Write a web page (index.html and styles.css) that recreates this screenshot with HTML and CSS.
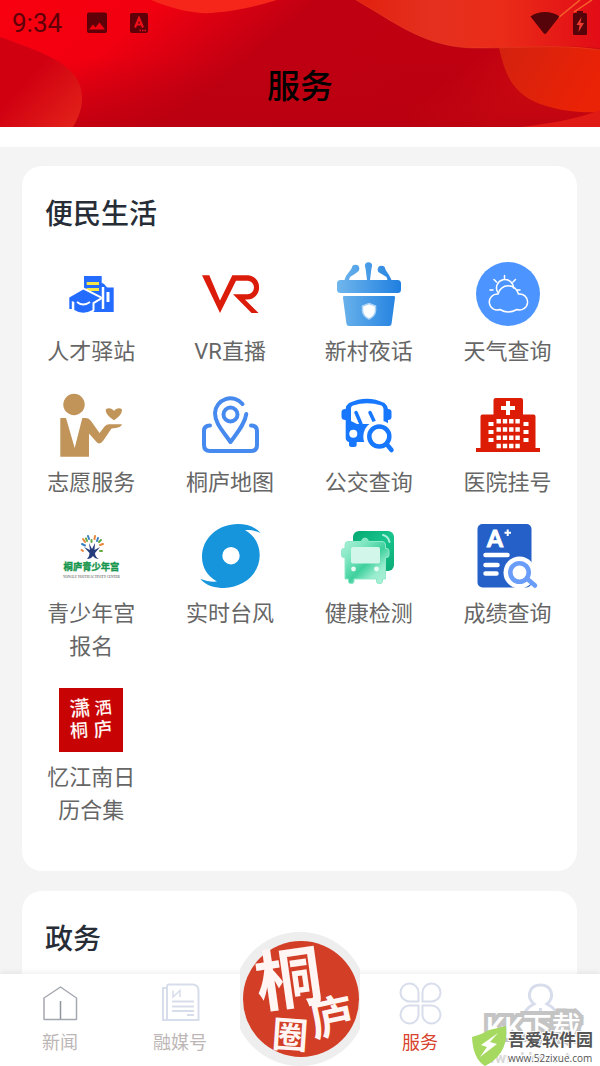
FILE: index.html
```html
<!DOCTYPE html>
<html lang="zh-CN">
<head>
  <meta charset="UTF-8"/>
  <meta name="viewport" content="width=device-width, initial-scale=1">
  <title>服务</title>
  <link rel="stylesheet" href="styles.css">
</head>
<body>

<header class="header">
  <svg class="header-bg" viewBox="0 0 600 127" preserveAspectRatio="none" aria-hidden="true">
    <defs>
      <linearGradient id="hbase" x1="0" y1="0" x2="1" y2="0.25">
        <stop offset="0" stop-color="#f8000f"/>
        <stop offset="0.25" stop-color="#f20010"/>
        <stop offset="0.5" stop-color="#bf0012"/>
        <stop offset="0.85" stop-color="#be0011"/>
        <stop offset="1" stop-color="#d00c10"/>
      </linearGradient>
      <linearGradient id="hlow" x1="0" y1="0" x2="0" y2="1">
        <stop offset="0.45" stop-color="#b80010" stop-opacity="0"/>
        <stop offset="1" stop-color="#b80010" stop-opacity="0.7"/>
      </linearGradient>
      <linearGradient id="hblob" x1="0" y1="0" x2="1" y2="1">
        <stop offset="0.4" stop-color="#d00011"/>
        <stop offset="1" stop-color="#e4241a"/>
      </linearGradient>
      <linearGradient id="hwave" x1="0" y1="0" x2="1" y2="0">
        <stop offset="0" stop-color="#e2200f"/>
        <stop offset="0.3" stop-color="#e5301f"/>
        <stop offset="0.6" stop-color="#ea2c18"/>
        <stop offset="1" stop-color="#e20c16"/>
      </linearGradient>
      <linearGradient id="hfold" x1="0" y1="0" x2="1" y2="0.4">
        <stop offset="0" stop-color="#d3220f"/>
        <stop offset="1" stop-color="#ea2206"/>
      </linearGradient>
    </defs>
    <rect width="600" height="127" fill="url(#hbase)"/>
    <rect width="600" height="127" fill="url(#hlow)"/>
    <path d="M0 37C30 48 62 58 75 76C87 94 82 112 73 127H0Z" fill="url(#hblob)"/>
    <path d="M151 0C175 10 195 14 212 13C240 11 260 5 277 0Z" fill="#f6261a"/>
    <path d="M356 0C395 22 425 48 476 48C530 48 560 44 600 48V0Z" fill="url(#hwave)"/>
    <path d="M499 48C505 72 510 92 540 104C560 111 580 113 600 112V50C570 45 540 46 499 48Z" fill="url(#hfold)"/>
    <path d="M520 127C555 123 580 118 600 110V127Z" fill="#e01a14"/>
    <path d="M356 0C395 22 425 48 476 48C530 48 560 44 600 50" fill="none" stroke="#f2512e" stroke-opacity="0.4"/>
    <path d="M558 18L580 0M574 12L592 0" stroke="#f7622c" stroke-width="1.500"/>
  </svg>
  <div class="status-bar">
    <span class="time">9:34</span>
    <svg width="22" height="22" viewBox="0 0 22 22" fill="#5f0009" aria-hidden="true">
      <path fill-rule="evenodd" d="M3 0.500h16a2 2 0 0 1 2 2v16.500a2 2 0 0 1-2 2H3a2 2 0 0 1-2-2V2.500a2 2 0 0 1 2-2ZM3 17.500H19L13.500 10.500L9.500 15.500L7 12.500Z"/>
    </svg>
    <svg class="lang" width="18" height="20" viewBox="0 0 18 20" aria-hidden="true">
      <rect width="18" height="20" rx="2" fill="#5f0009"/>
      <path d="M5 14.500L9 5L13 14.500M6.500 11.500H11.500" fill="none" stroke="#ee0f1a" stroke-width="2.200"/>
      <path d="M9.500 17.500H16" stroke="#ee0f1a" stroke-width="1.500" stroke-dasharray="1.500 1"/>
    </svg>
    <span class="spacer"></span>
    <svg width="30" height="24" viewBox="0 0 30 24" fill="#560409" aria-hidden="true">
      <path d="M0.500 5.500C8 -0.500 22 -0.500 29.500 5.500L16.500 22Q15 24 13.500 22Z"/>
    </svg>
    <svg class="battery" width="16" height="24" viewBox="0 0 16 24" aria-hidden="true">
      <path d="M5 0h6v2h2.500A1.500 1.500 0 0 1 15 3.500V22.500a1.500 1.500 0 0 1-1.500 1.500h-11A1.500 1.500 0 0 1 1 22.500V3.500A1.500 1.500 0 0 1 2.500 2H5Z" fill="#560409"/>
      <path d="M9.500 6L4.500 14H7.500L6.500 21L12 12H8.500Z" fill="#ee3a30"/>
    </svg>
  </div>
  <h1>服务</h1>
</header>

<main class="content">
  <section class="card">
    <h2>便民生活</h2>
    <div class="services">
      <a class="service" href="#">
        <svg viewBox="0 0 64 64" aria-hidden="true">
          <path d="M25 14H42.700V21C46 21 46 25 49 25.500H54.700V50H25Z" fill="#246cff"/>
          <path d="M44 25V47" stroke="#fff" stroke-width="2.500"/>
          <path d="M49 30V40" stroke="#fff" stroke-width="3"/>
          <path d="M27.700 21.500H40M27.700 27.500H40" stroke="#f4e648" stroke-width="3"/>
          <path d="M10.300 35.500L24.300 27.500L41 36L33.500 40.500V48Q24 53.500 15.300 48V40L12.800 39V47H10.300Z" fill="#246cff" stroke="#fff" stroke-width="4" paint-order="stroke" stroke-linejoin="round"/>
          <path d="M18 40Q24 45 31 40" fill="none" stroke="#fff" stroke-width="2"/>
        </svg>
        <span>人才驿站</span>
      </a>
      <a class="service" href="#">
        <svg viewBox="0 0 64 64" aria-hidden="true">
          <path d="M4 13.300H11.300L22 38.500L34.300 13.300H49.500A11.500 12 0 0 1 49.500 37.500H47L60.500 51H53.500L35 32.300H49.500A6.500 6.800 0 0 0 49.500 18.700H38L22 51Z" fill="#dc1c0a"/>
        </svg>
        <span>VR直播</span>
      </a>
      <a class="service" href="#">
        <svg viewBox="0 0 64 64" aria-hidden="true">
          <defs>
            <linearGradient id="pod" gradientUnits="userSpaceOnUse" x1="0" y1="0" x2="64" y2="0">
              <stop offset="0" stop-color="#70b6ec"/>
              <stop offset="1" stop-color="#1f7fe0"/>
            </linearGradient>
          </defs>
          <g fill="url(#pod)">
            <rect x="0" y="18" width="64" height="13" rx="3.500"/>
            <path d="M7 34H57Q58.500 34 58 36L54.500 62Q54 64 52 64H12Q10 64 9.500 62L6 36Q5.500 34 7 34Z"/>
            <circle cx="18.500" cy="6.500" r="3.800"/>
            <circle cx="31.500" cy="3.800" r="3.600"/>
            <circle cx="44.500" cy="7.500" r="3.800"/>
            <path d="M15 6L20 10.500L13 15L12 18H7.500L9 14Z"/>
            <path d="M28.500 6H34.500L33 18H30Z"/>
            <path d="M43 11L48 7L52 13L54.500 18H50.500L49.500 15Z"/>
          </g>
          <path d="M32 41.500L38.500 44V49Q38 54 32 57Q26 54 25.500 49V44Z" fill="#fff" stroke="#a9d2f6" stroke-width="1.500"/>
        </svg>
        <span>新村夜话</span>
      </a>
      <a class="service" href="#">
        <svg viewBox="0 0 64 64" aria-hidden="true">
          <circle cx="32" cy="32" r="32" fill="#4c94ff"/>
          <g fill="none" stroke="#fff" stroke-width="1.500" stroke-linecap="round">
            <path d="M21.500 30A8.500 8.500 0 1 1 37.500 26M28.500 13.500V17.500M18 17.500L20.500 20M39.500 17.500L37 20M14 28H17M41 28H44"/>
            <path d="M24 47.500A8 8 0 1 1 22 32A10.500 10.500 0 0 1 42.500 32A8 8 0 1 1 41 47.500Q32 52.500 24 47.500Z"/>
          </g>
        </svg>
        <span>天气查询</span>
      </a>

      <a class="service" href="#">
        <svg viewBox="0 0 64 64" fill="#c1945a" aria-hidden="true">
          <circle cx="15" cy="11.500" r="10.700"/>
          <path d="M1.300 25H7L15.700 55L23.300 25H27Q30 25 32 28L40.500 40L46 33Q47.500 31.300 50 31.300H63Q62 35 52.500 35.500L44 48Q41 52 38 49.500L30 40.500V63.700H1.300Z"/>
          <path d="M55 27.300C50 24 46.700 21 46.700 16.500C49 14.500 53 15 55 18C57 15 61 14.500 63 16.500C63 21 60 24 55 27.300Z"/>
        </svg>
        <span>志愿服务</span>
      </a>
      <a class="service" href="#">
        <svg viewBox="0 0 64 64" fill="none" stroke="#468af0" stroke-width="4" stroke-linecap="round" stroke-linejoin="round" aria-hidden="true">
          <circle cx="32.500" cy="21.500" r="7"/>
          <path d="M44.500 11A15.500 15.500 0 0 0 17 20C17 30 24 37 32.500 49C39 40 47 31 48.300 21"/>
          <path d="M12 32.500Q6 32.500 6 38V52Q6 58 12 58H53Q59 58 59 52V38Q59 32.500 53 32.500"/>
        </svg>
        <span>桐庐地图</span>
      </a>
      <a class="service" href="#">
        <svg viewBox="0 0 64 64" aria-hidden="true">
          <path d="M12 10Q30 1.500 47.500 10Q50 12 51 16Q54.500 16 54.500 19V24Q54.500 27 51 27V49H19.700V51.500Q19.700 54 17 54H14.500Q12 54 12 51.500V49Q8.700 48 8.700 45V27Q4.500 27 4.500 24V19Q4.500 16 8.700 16Q9 12 12 10Z" fill="#1778ff"/>
          <path d="M16 12.500Q30 8 44.500 12.500Q46.500 13.500 46.500 16V29L36 31H20L14 28V15Q14 13 16 12.500Z" fill="#fff"/>
          <path d="M19 19.500L24 31M33 19.500L37 28" stroke="#1778ff" stroke-width="3.500" stroke-linecap="round"/>
          <circle cx="16.300" cy="40.700" r="4" fill="#fff"/>
          <circle cx="42.300" cy="43.500" r="16" fill="#fff"/>
          <circle cx="42.300" cy="43.500" r="10" fill="none" stroke="#1778ff" stroke-width="4.500"/>
          <path d="M49.500 51L54.500 57" stroke="#1778ff" stroke-width="4.500" stroke-linecap="round"/>
        </svg>
        <span>公交查询</span>
      </a>
      <a class="service" href="#">
        <svg viewBox="0 0 64 64" aria-hidden="true">
          <path d="M20 5H45Q47 5 47 7V21.500H57.500Q59.500 21.500 59.500 23.500V55H64V59H0V55H4.500V23.500Q4.500 21.500 6.500 21.500H17.500V7Q17.500 5 20 5Z" fill="#dc1c05"/>
          <path d="M32 8V22M25 15H39" stroke="#fff" stroke-width="4"/>
          <path d="M20.500 28.200H44M20.500 36.500H44M20.500 44.700H44M20.500 53H44" stroke="#fff" stroke-width="4.400" stroke-dasharray="4.400 1.900"/>
          <path d="M12.500 31H17.500M12.500 39H17.500M12.500 47H17.500M47.500 31H52.500M47.500 39H52.500M47.500 47H52.500" stroke="#fff" stroke-width="4"/>
        </svg>
        <span>医院挂号</span>
      </a>

      <a class="service" href="#">
        <svg viewBox="0 0 64 64" aria-hidden="true">
          <path d="M28 35Q31 32 30.500 29L25 23L31 26L30 19L33 25L36 19L35.500 26L41 23L36 29Q36 33 40 35Q36 35 34 32Q32 35 28 35Z" fill="#253c7c"/>
          <g stroke-width="2" stroke-linecap="round">
            <path d="M24 15L26 18M36 12L35.500 15M41 21L44 20M22.500 26L24 27" stroke="#e8873a"/>
            <path d="M29 12L30 15M39 14L38 17M23 20L26 21.500" stroke="#3b7fc4"/>
            <path d="M32.500 16V18M42 16L40 18M41 27L43 27M27 14.500L28 17" stroke="#62a945"/>
          </g>
          <text class="mark green" x="32.500" y="46" font-size="9.300">桐庐青少年宫</text>
          <text class="mark tiny" x="32.500" y="53.500" font-size="3.200">YONGLU YOUTH ACTIVITY CENTER</text>
        </svg>
        <span>青少年宫报名</span>
      </a>
      <a class="service" href="#">
        <svg viewBox="0 0 64 64" aria-hidden="true">
          <path fill-rule="evenodd" d="M62.700 9C56 2 48 0 40 0C20 0 4 14 4 33C4 43 9 52 19 57.500C13 58 8 57 2.300 54.700C8 62 18 64 26 64C46 63 61.700 50 61.700 31C61.700 20 56 11 47 6C53 5.500 58 7 62.700 9ZM33 23A8.700 8.700 0 1 0 33 40.400A8.700 8.700 0 1 0 33 23Z" fill="#1795dc"/>
        </svg>
        <span>实时台风</span>
      </a>
      <a class="service" href="#">
        <svg viewBox="0 0 64 64" aria-hidden="true">
          <defs>
            <linearGradient id="hb" x1="0" y1="0" x2="1" y2="1">
              <stop offset="0" stop-color="#05a871"/>
              <stop offset="0.500" stop-color="#17c48c"/>
              <stop offset="1" stop-color="#0cab75"/>
            </linearGradient>
            <linearGradient id="hf" x1="0" y1="0" x2="1" y2="1">
              <stop offset="0" stop-color="#b4f3da"/>
              <stop offset="0.300" stop-color="#7fe6c1"/>
              <stop offset="0.550" stop-color="#3fd09e"/>
              <stop offset="0.750" stop-color="#98ecce"/>
              <stop offset="1" stop-color="#b4f3da"/>
            </linearGradient>
          </defs>
          <rect x="16" y="7" width="41" height="40" rx="6" fill="url(#hb)"/>
          <path d="M46 11Q51 12 52.500 18" fill="none" stroke="#a9f0d6" stroke-width="2" stroke-linecap="round"/>
          <path d="M11 17.500H24.500Q25 14 28 14Q31 14 31.500 17.500H45Q48.500 17.500 48.500 21V24.500H50Q52 24.500 52 27V31Q52 33.500 50 33.500H48.500V55H45.500V57.500Q45.500 59.500 43 59.500H41.500Q39.500 59.500 39.500 57.500V55H17V57.500Q17 59.500 15 59.500H13.500Q11.500 59.500 11.500 57.500V55H8V33.500H6.500Q4.500 33.500 4.500 31V27Q4.500 24.500 6.500 24.500H8V21Q8 17.500 11 17.500Z" fill="url(#hf)" stroke="#8fe9c8"/>
          <rect x="14" y="23" width="29" height="16.500" rx="2" fill="#d3f6ea"/>
          <circle cx="16.500" cy="45" r="2.400" fill="#e8fbf4"/>
          <circle cx="39.500" cy="45" r="2.400" fill="#e8fbf4"/>
        </svg>
        <span>健康检测</span>
      </a>
      <a class="service" href="#">
        <svg viewBox="0 0 64 64" aria-hidden="true">
          <rect x="1.500" y="0" width="54" height="63.500" rx="5" fill="#2560c8"/>
          <text class="mark grade" x="19" y="22.500" font-size="23">A</text>
          <path d="M28.500 8.700H35M31.700 5.500V12" stroke="#fff" stroke-width="2"/>
          <path d="M9.500 31H31.500M9.500 41H21.500M9.500 49.500H20.500" stroke="#fff" stroke-width="4.500" stroke-linecap="round"/>
          <circle cx="43.500" cy="48.500" r="16" fill="#fff"/>
          <circle cx="43.500" cy="48.500" r="9.200" fill="none" stroke="#6a9dfa" stroke-width="4.600"/>
          <path d="M52 55.500L59 61.500" stroke="#6a9dfa" stroke-width="4.500" stroke-linecap="round"/>
        </svg>
        <span>成绩查询</span>
      </a>

      <a class="service" href="#">
        <svg viewBox="0 0 64 64" aria-hidden="true">
          <rect width="64" height="64" fill="#c80303"/>
          <g class="mark script">
            <text x="21" y="28" font-size="21" transform="rotate(-6 21 20)">潇</text>
            <text x="44" y="26" font-size="17" transform="rotate(-6 44 20)">洒</text>
            <text x="20" y="49" font-size="18" transform="rotate(-4 20 42)">桐</text>
            <text x="44" y="48" font-size="19" transform="rotate(-6 44 42)">庐</text>
          </g>
        </svg>
        <span>忆江南日历合集</span>
      </a>
    </div>
  </section>

  <section class="card">
    <h2>政务</h2>
  </section>
</main>

<nav class="tabs">
  <a class="tab" href="#">
    <svg viewBox="0 0 44 44" fill="none" stroke="#a5a8b0" stroke-width="1.500" stroke-linejoin="round" aria-hidden="true">
      <path d="M6 38V17L22.500 6L38.500 17V38Q38.500 38.500 38 38.500H6.500Q6 38.500 6 38Z"/>
      <path d="M22.500 20V38" stroke="#8f949e"/>
    </svg>
    <span>新闻</span>
  </a>
  <a class="tab" href="#">
    <svg viewBox="0 0 44 44" fill="none" stroke="#d8ddec" stroke-width="2" aria-hidden="true">
      <path d="M9 39V5.500Q9 3.500 11 3.500H35Q40.500 4 40.500 10V39H5Q5 39 5 37V7H9"/>
      <path d="M15 9.500V16L22 9.500V16" stroke-width="1.500"/>
      <path d="M14 20.500H36M14 25.500H36M14 30H36M29 34H36"/>
    </svg>
    <span>融媒号</span>
  </a>
  <a class="tab home" href="#" aria-label="桐庐圈">
    <svg viewBox="0 0 120 134" aria-hidden="true">
      <circle cx="60" cy="67" r="67" fill="#eee"/>
      <circle cx="61" cy="67" r="58" fill="#d33e27"/>
      <g class="mark brush">
        <text x="49" y="71" font-size="66" transform="rotate(-8 49 48)">桐</text>
        <text x="92" y="101" font-size="44" transform="rotate(-12 92 86)">庐</text>
        <text x="50" y="116" font-size="36" transform="rotate(4 50 104)">圈</text>
      </g>
    </svg>
  </a>
  <a class="tab active" href="#">
    <svg viewBox="0 0 44 44" fill="none" stroke="#d8ddec" stroke-width="2" aria-hidden="true">
      <path d="M20.500 20.500H12A9 9 0 1 1 20.500 12Z"/>
      <path d="M24.500 20.500V12A9 9 0 1 1 33 20.500Z"/>
      <path d="M20.500 24.500V33A9 9 0 1 1 12 24.500Z"/>
      <path d="M24.500 24.500H33A9 9 0 1 1 24.500 33Z"/>
    </svg>
    <span>服务</span>
  </a>
  <a class="tab" href="#" aria-label="我的">
    <svg viewBox="0 0 44 44" fill="none" stroke="#d8ddec" stroke-width="3" aria-hidden="true">
      <path d="M16 23C8 16 11 4 22.500 4C34 4 37 16 29 23C35 26 40 30 40 39H5C5 30 10 26 16 23Z"/>
      <path d="M22.500 27V35"/>
    </svg>
  </a>
</nav>

<div class="watermark" aria-hidden="true">
  <span class="wm-back">KK下载</span>
  <span class="wm-back-url">www.kkx.net</span>
  <svg viewBox="0 0 36 40">
    <path d="M0 11Q9 9 17 4Q26 2 34 0Q37 28 13 40Q1 33 0 11Z" fill="#a5d960"/>
    <path d="M26 7L9 19L15 21L8 31L25 18L18 16Z" fill="#fff"/>
  </svg>
  <div class="wm-text">
    <b>吾爱软件园</b>
    <span>www.52zixue.com</span>
  </div>
</div>

</body>
</html>
```
FILE: styles.css
```css
* { box-sizing: border-box; }
body {
  font-family: Roboto, "Noto Sans CJK SC", sans-serif;
  background: #f4f4f4;
  margin: 0; color: #666;
  height: 100vh; overflow: hidden;
  display: flex; flex-direction: column;
}
h1, h2 { margin: 0; font-weight: 500; }
a { color: inherit; text-decoration: none; }
svg { display: block; flex: none; }

/* header */
.header {
  position: relative; flex: none;
  border-bottom: 20px solid #fff;
}
.header-bg {
  position: absolute; top: 0; left: 0;
  width: 100%; height: 100%; z-index: -1;
}
.status-bar {
  display: flex; align-items: center;
  height: 46px; padding: 0 12px; color: #5f0009;
}
.time { font-size: 26px; margin-right: 24px; }
.lang { margin-left: 22px; }
.spacer { flex: 1; }
.battery { margin-left: 12px; }
.header h1 {
  font-size: 33px; line-height: 48px; text-align: center;
  color: #000; padding: 17px 0 16px;
}

/* service cards */
.content {
  flex: 1; min-height: 0; overflow-y: auto; scrollbar-width: none;
  padding: 19px 23px 0 22px;
}
.card {
  background: #fff; border-radius: 20px;
  padding: 29px 0 19px; margin-bottom: 20px;
}
.card h2 {
  font-size: 28px; line-height: 40px; color: #262d36;
  padding: 0 23px; margin-bottom: 27px;
}
.services { display: grid; grid-template-columns: repeat(4, 1fr); }
.service {
  display: flex; flex-direction: column; align-items: center;
  padding: 0 20px 25px;
}
.service svg { width: 64px; height: 64px; overflow: visible; }
.service span {
  font-size: 22px; line-height: 33px; text-align: center;
  margin-top: 9px;
}

/* lettering inside the icons */
.mark { text-anchor: middle; font-family: "Noto Sans CJK SC", sans-serif; font-weight: 700; }
.green { fill: #16964c; stroke: #16964c; stroke-width: 0.4px; }
.tiny { fill: #777; font-family: "Liberation Serif", serif; }
.grade { fill: #fff; stroke: #fff; font-family: Lato, sans-serif; }
.brush { fill: #fff5f3; }
.script { fill: #fff5f3; font-weight: 500; }

/* bottom tabs */
.tabs {
  position: relative; flex: none; display: flex;
  background: #fff; box-shadow: 0 -2px 6px rgba(0,0,0,0.06);
}
.tab {
  flex: 1; display: flex; flex-direction: column; align-items: center;
  padding: 7px 0 11px; color: #bdb6b6;
}
.tab svg { width: 44px; height: 44px; }
.tab span { font-size: 18px; line-height: 24px; margin-top: 6px; }
.active { color: #d8412b; }
.home { position: relative; padding: 0; }
.home svg {
  position: absolute; bottom: 0; left: 50%;
  width: 120px; height: 134px; margin-left: -60px;
}

/* site stamp */
.watermark {
  position: absolute; right: 0; bottom: 0;
  width: 128px; height: 54px;
  display: flex; align-items: flex-end;
}
.watermark svg { position: relative; width: 36px; height: 40px; }
.wm-back {
  position: absolute; top: 0; left: 14px;
  font-size: 29px; line-height: 32px; font-weight: 500;
  color: #fff; white-space: nowrap;
  -webkit-text-stroke: 8px #c4c4c4; paint-order: stroke;
}
.wm-back-url {
  position: absolute; bottom: 0; left: 12px;
  font-size: 15px; line-height: 16px; font-weight: 700; color: #d8d8d8;
}
.wm-text {
  position: relative; display: flex; flex-direction: column;
  color: #555; white-space: nowrap;
  -webkit-text-stroke: 2px #fff; paint-order: stroke;
}
.wm-text b { font-size: 17px; line-height: 20px; }
.wm-text span {
  font-family: "Open Sans", sans-serif; font-size: 10px; line-height: 16px;
}
```
